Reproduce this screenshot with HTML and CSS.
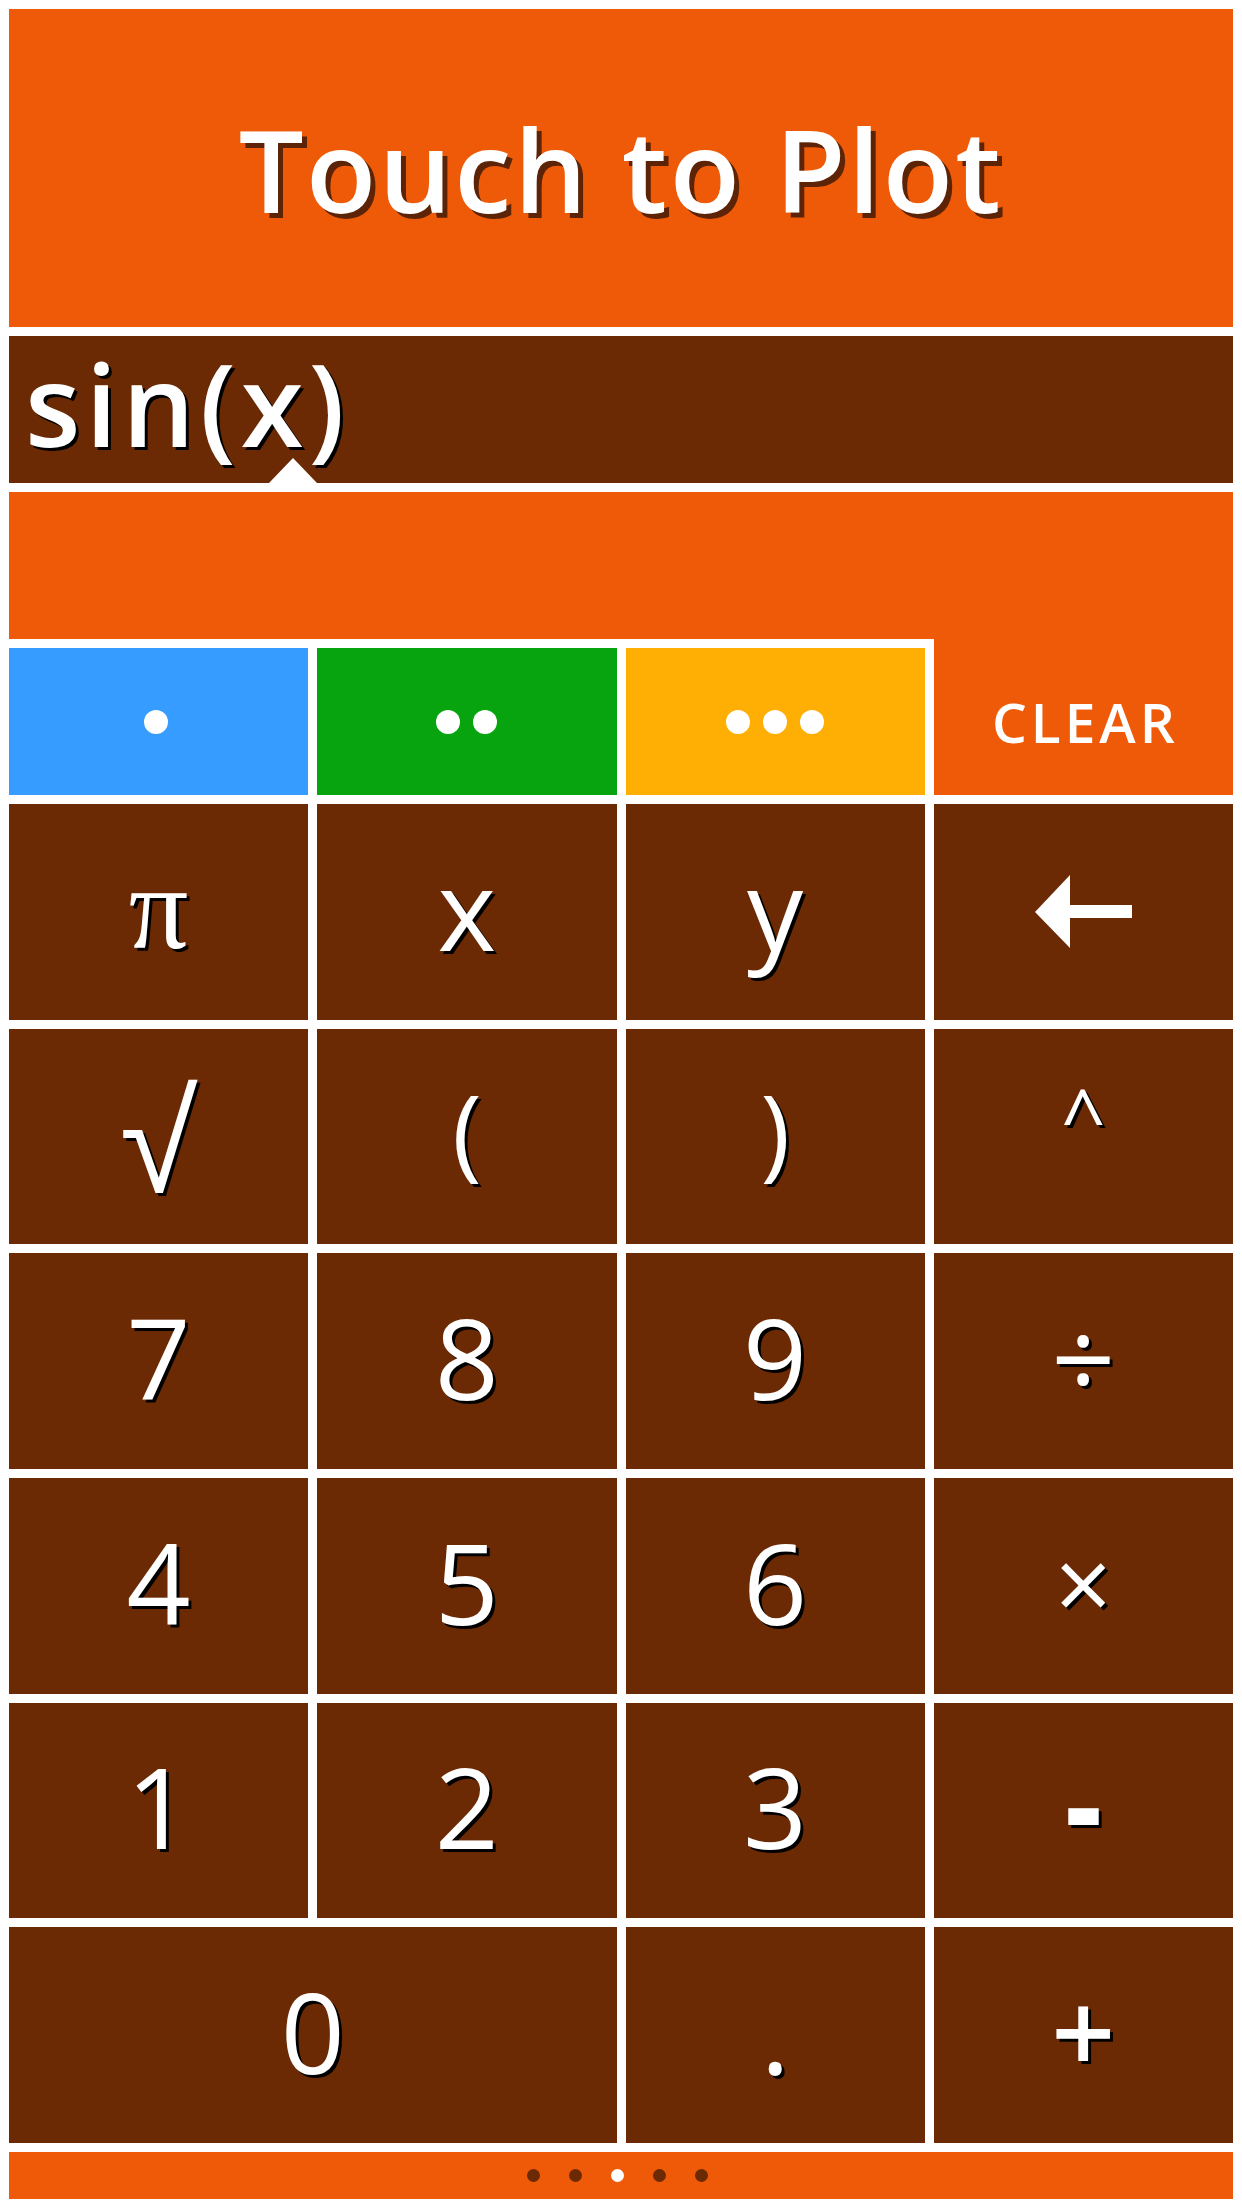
FILE: index.html
```html
<!DOCTYPE html>
<html lang="en">
<head>
<meta charset="utf-8">
<title>Touch to Plot</title>
<link rel="stylesheet" href="styles.css">
</head>
<body>
<div class="app">
  <header class="title-bar"><h1 class="title">Touch to Plot</h1></header>

  <div class="expr">
    <span class="expr-text">sin(x)</span>
    <span class="cursor"></span>
  </div>

  <div class="plot"></div>

  <div class="modes">
    <div class="mode mode-blue"><span class="dot"></span></div>
    <div class="mode mode-green"><span class="dot"></span><span class="dot"></span></div>
    <div class="mode mode-yellow"><span class="dot"></span><span class="dot"></span><span class="dot"></span></div>
    <div class="mode mode-clear">CLEAR</div>
  </div>

  <div class="keypad">
    <div class="key key-pi">π</div>
    <div class="key">x</div>
    <div class="key">y</div>
    <div class="key key-icon">
      <svg class="arrow" viewBox="0 0 97 73" width="97" height="73" aria-label="backspace">
        <polygon points="0,37 35,0 35,73" fill="#fff"/>
        <rect x="34" y="30" width="63" height="13" fill="#fff"/>
      </svg>
    </div>

    <div class="key key-sqrt">√</div>
    <div class="key key-paren">(</div>
    <div class="key key-paren">)</div>
    <div class="key key-caret">^</div>

    <div class="key">7</div>
    <div class="key">8</div>
    <div class="key">9</div>
    <div class="key key-op">÷</div>

    <div class="key">4</div>
    <div class="key">5</div>
    <div class="key">6</div>
    <div class="key key-op key-times">×</div>

    <div class="key">1</div>
    <div class="key">2</div>
    <div class="key">3</div>
    <div class="key key-op key-minus">-</div>

    <div class="key key-zero">0</div>
    <div class="key">.</div>
    <div class="key key-op key-plus">+</div>
  </div>

  <footer class="pager">
    <span class="pdot"></span>
    <span class="pdot"></span>
    <span class="pdot pdot-active"></span>
    <span class="pdot"></span>
    <span class="pdot"></span>
  </footer>
</div>
</body>
</html>
```

FILE: styles.css
```css
* {
  box-sizing: border-box;
}

html, body {
  margin: 0;
  padding: 0;
  background: #ffffff;
}

body {
  font-family: "Open Sans", "Noto Sans", sans-serif;
  color: #ffffff;
}

.app {
  width: 1242px;
  height: 2208px;
  padding: 9px;
  display: grid;
  grid-template-rows: 318px 147px 147px 147px 1fr 47px;
  gap: 9px;
}

.title-bar {
  background: #ee5a07;
  display: flex;
  align-items: center;
  justify-content: center;
}

.title {
  margin: 0;
  font-size: 115px;
  line-height: 1;
  font-weight: 600;
  letter-spacing: 2.5px;
  text-shadow: 5px 5px 0 #5c2306;
}

.expr {
  position: relative;
  background: #6b2a04;
  padding: 10px 16px 0;
}

.expr-text {
  font-size: 114px;
  line-height: 1;
  font-weight: 600;
  letter-spacing: 5px;
  text-shadow: 3px 3px 0 #000;
}

.cursor {
  position: absolute;
  left: 260px;
  bottom: 0;
  width: 0;
  height: 0;
  border-left: 24px solid transparent;
  border-right: 24px solid transparent;
  border-bottom: 25px solid #ffffff;
}

.plot {
  background: #ee5a07;
}

.modes {
  display: grid;
  grid-template-columns: repeat(4, 1fr);
  gap: 9px;
}

.mode {
  display: flex;
  align-items: center;
  justify-content: center;
  gap: 13px;
}

.mode-blue { background: #379cff; }
.mode-green { background: #07a40f; }
.mode-yellow { background: #ffae03; }

.mode-blue .dot {
  margin-right: 6px;
}

.mode-clear {
  background: #ee5a07;
  box-shadow: 0 -9px 0 #ee5a07;
  font-size: 55px;
  font-weight: 600;
  letter-spacing: 4px;
  padding-left: 4px;
}

.dot {
  width: 24px;
  height: 24px;
  border-radius: 50%;
  background: #ffffff;
}

.keypad {
  display: grid;
  grid-template-columns: repeat(4, 1fr);
  grid-template-rows: repeat(6, 1fr);
  gap: 9px;
}

.key {
  background: #6b2a04;
  display: flex;
  align-items: center;
  justify-content: center;
  font-size: 112px;
  line-height: 1;
  font-weight: 500;
  padding-bottom: 8px;
  text-shadow: 3px 3px 0 #000;
}

.key-zero {
  grid-column: span 2;
}

.key-pi {
  font-family: "Liberation Serif", "DejaVu Serif", serif;
  font-size: 118px;
  padding-bottom: 6px;
}

.key-sqrt {
  font-family: "Liberation Sans", "DejaVu Sans", sans-serif;
  font-weight: 400;
  font-size: 142px;
  padding-bottom: 0;
  padding-top: 14px;
}

.key-paren {
  font-weight: 500;
  font-size: 100px;
  padding-bottom: 14px;
}

.key-caret {
  font-size: 78px;
  padding-bottom: 40px;
}

.key-op {
  font-weight: 500;
}

.key-times {
  font-size: 100px;
}

.key-minus {
  font-weight: 800;
  font-size: 110px;
  padding-bottom: 14px;
}

.key-plus {
  font-weight: 600;
}

.key-icon {
  padding-bottom: 0;
}

.arrow {
  display: block;
}

.pager {
  background: #ee5a07;
  display: flex;
  align-items: center;
  justify-content: center;
  gap: 29px;
  padding-right: 8px;
}

.pdot {
  width: 13px;
  height: 13px;
  border-radius: 50%;
  background: #6b2a04;
}

.pdot-active {
  background: #ffffff;
}
```
